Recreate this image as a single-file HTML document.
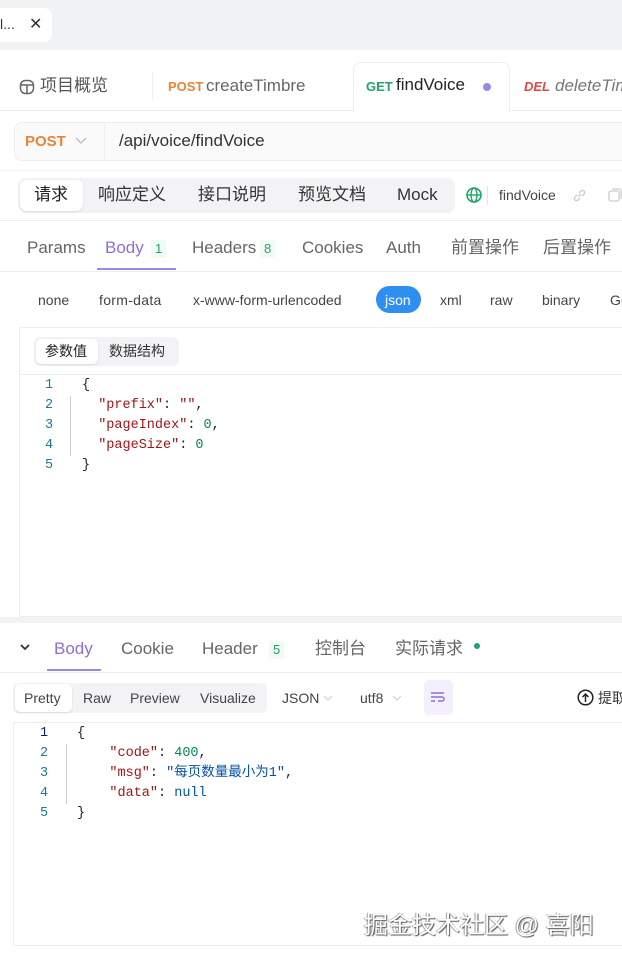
<!DOCTYPE html>
<html><head><meta charset="utf-8"><style>
*{margin:0;padding:0;box-sizing:border-box}
body{width:622px;height:962px;overflow:hidden;background:#fff;position:relative;font-family:"Liberation Sans","Noto Sans CJK SC",sans-serif;color:#333}
.a{position:absolute;white-space:nowrap;line-height:1.2}
.m{font-family:"Liberation Mono","DejaVu Sans Mono",monospace;font-size:13.5px}
.k{color:#a31515}.n{color:#098658}.s{color:#0451a5}
.ln{color:#237893}
.hl{position:absolute;height:1px;background:#ececee}
</style></head><body>
<div class="a" style="left:0;top:0;width:622px;height:50px;background:#f1f2f4"></div>
<div class="a" style="left:-10px;top:8px;width:62px;height:34px;background:#fff;border-radius:8px"></div>
<div class="a" style="left:0;top:16px;font-size:14px;color:#333">l...</div>
<div class="a" style="left:29px;top:15px;font-size:16px;color:#333">✕</div>

<div class="a" style="left:353px;top:62px;width:157px;height:50px;background:#fff;border:1px solid #eee;border-bottom:none;border-radius:8px 8px 0 0"></div>
<div class="hl" style="left:0;top:110px;width:353px"></div><div class="hl" style="left:510px;top:110px;width:112px"></div>
<svg class="a" style="left:19px;top:79px" width="16" height="16" viewBox="0 0 16 16"><rect x="1.5" y="1.5" width="13" height="13" rx="5" fill="none" stroke="#666" stroke-width="1.5"/><path d="M2 6h12M8 6v8" stroke="#666" stroke-width="1.5"/></svg>
<div class="a" style="left:40px;top:76px;font-size:17px;color:#555">项目概览</div>
<div class="a" style="left:152px;top:72px;width:1px;height:28px;background:#eee"></div>
<div class="a" style="left:168px;top:79px;font-size:13px;font-weight:bold;color:#e8833a">POST</div>
<div class="a" style="left:206px;top:76px;font-size:17px;color:#666">createTimbre</div>
<div class="a" style="left:366px;top:79px;font-size:13px;font-weight:bold;color:#1fa56a">GET</div>
<div class="a" style="left:396px;top:75px;font-size:17px;color:#222">findVoice</div>
<div class="a" style="left:483px;top:83px;width:8px;height:8px;border-radius:50%;background:#9b87e8"></div>
<div class="a" style="left:524px;top:79px;font-size:13px;font-weight:bold;font-style:italic;color:#e04848">DEL</div>
<div class="a" style="left:555px;top:76px;font-size:17px;font-style:italic;color:#777">deleteTimbre</div>

<div class="a" style="left:14px;top:122px;width:620px;height:39px;background:#fafafa;border:1px solid #eee;border-radius:8px"></div>
<div class="a" style="left:25px;top:133px;font-size:15px;font-weight:bold;color:#e8833a">POST</div>
<svg class="a" style="left:75px;top:137px" width="12" height="8"><path d="M1 1l5 5 5-5" fill="none" stroke="#bbb" stroke-width="1.3"/></svg>
<div class="a" style="left:104px;top:123px;width:1px;height:37px;background:#eee"></div>
<div class="a" style="left:119px;top:131px;font-size:17px;color:#333">/api/voice/findVoice</div>
<div class="hl" style="left:0;top:170px;width:622px;background:#f3f3f3"></div>

<div class="a" style="left:18px;top:178px;width:437px;height:35px;background:#f3f3f5;border-radius:8px"></div>
<div class="a" style="left:20px;top:180px;width:63px;height:31px;background:#fff;border-radius:7px;box-shadow:0 1px 2px rgba(0,0,0,.1)"></div>
<div class="a" style="left:34px;top:185px;font-size:17px;color:#222">请求</div>
<div class="a" style="left:98px;top:185px;font-size:17px;color:#333">响应定义</div>
<div class="a" style="left:198px;top:185px;font-size:17px;color:#333">接口说明</div>
<div class="a" style="left:298px;top:185px;font-size:17px;color:#333">预览文档</div>
<div class="a" style="left:397px;top:185px;font-size:17px;color:#333">Mock</div>
<svg class="a" style="left:466px;top:187px" width="16" height="16" viewBox="0 0 16 16"><circle cx="8" cy="8" r="7" fill="none" stroke="#1fa56a" stroke-width="1.6"/><ellipse cx="8" cy="8" rx="3" ry="7" fill="none" stroke="#1fa56a" stroke-width="1.4"/><path d="M1 8h14" stroke="#1fa56a" stroke-width="1.4"/></svg>
<div class="a" style="left:487px;top:186px;width:1px;height:19px;background:#e6e6e6"></div>
<div class="a" style="left:499px;top:187px;font-size:14px;color:#444">findVoice</div>
<svg class="a" style="left:572px;top:188px" width="15" height="15" viewBox="0 0 15 15"><path d="M6 9l3-3M5 7L3 9a2 2 0 003 3l2-2M10 8l2-2a2 2 0 00-3-3L7 5" fill="none" stroke="#ccc" stroke-width="1.3"/></svg>
<svg class="a" style="left:608px;top:188px" width="14" height="15"><rect x="1" y="3" width="10" height="10" rx="2" fill="none" stroke="#ccc" stroke-width="1.3"/><path d="M4 1h7a2 2 0 012 2v8" fill="none" stroke="#ccc" stroke-width="1.3"/></svg>
<div class="hl" style="left:0;top:220px;width:622px"></div>

<div class="a" style="left:27px;top:238px;font-size:17px;color:#666">Params</div>
<div class="a" style="left:105px;top:238px;font-size:17px;color:#8e6fd8">Body</div>
<div class="a" style="left:151px;top:240px;font-size:13px;color:#1fa56a;background:#f2faf5;padding:1px 4px">1</div>
<div class="a" style="left:192px;top:238px;font-size:17px;color:#666">Headers</div>
<div class="a" style="left:260px;top:240px;font-size:13px;color:#1fa56a;background:#f2faf5;padding:1px 4px">8</div>
<div class="a" style="left:302px;top:238px;font-size:17px;color:#666">Cookies</div>
<div class="a" style="left:386px;top:238px;font-size:17px;color:#666">Auth</div>
<div class="a" style="left:451px;top:238px;font-size:17px;color:#666">前置操作</div>
<div class="a" style="left:543px;top:238px;font-size:17px;color:#666">后置操作</div>
<div class="a" style="left:97px;top:268px;width:79px;height:2px;background:#9b87e8"></div>
<div class="hl" style="left:0;top:271px;width:622px"></div>

<div class="a" style="left:38px;top:292px;font-size:14px;color:#444">none</div>
<div class="a" style="left:99px;top:292px;font-size:14px;color:#444;letter-spacing:0.3px">form-data</div>
<div class="a" style="left:193px;top:292px;font-size:14px;color:#444">x-www-form-urlencoded</div>
<div class="a" style="left:376px;top:286px;width:45px;height:27px;background:#2e8ff0;border-radius:14px"></div>
<div class="a" style="left:385px;top:292px;font-size:14px;color:#fff">json</div>
<div class="a" style="left:440px;top:292px;font-size:14px;color:#444">xml</div>
<div class="a" style="left:490px;top:292px;font-size:14px;color:#444">raw</div>
<div class="a" style="left:542px;top:292px;font-size:14px;color:#444">binary</div>
<div class="a" style="left:610px;top:292px;font-size:14px;color:#444">Gr</div>

<div class="a" style="left:19px;top:327px;width:610px;height:290px;border:1px solid #eee;border-right:none"></div>
<div class="a" style="left:34px;top:337px;width:145px;height:29px;background:#f3f3f5;border-radius:6px"></div>
<div class="a" style="left:36px;top:339px;width:62px;height:25px;background:#fff;border-radius:5px;box-shadow:0 1px 2px rgba(0,0,0,.1)"></div>
<div class="a" style="left:45px;top:343px;font-size:14px;color:#222">参数值</div>
<div class="a" style="left:109px;top:343px;font-size:14px;color:#333">数据结构</div>
<div class="hl" style="left:20px;top:374px;width:602px"></div>
<div class="a" style="left:70px;top:396px;width:1px;height:60px;background:#ccc"></div>
<div class="a m" style="left:45px;top:376px;line-height:20px"><span class="ln">1<br>2<br>3<br>4<br>5</span></div>
<div class="a m" style="left:82px;top:376px;line-height:20px;color:#222">{<br>&nbsp;&nbsp;<span class="k">"prefix"</span>: <span class="k">""</span>,<br>&nbsp;&nbsp;<span class="k">"pageIndex"</span>: <span class="n">0</span>,<br>&nbsp;&nbsp;<span class="k">"pageSize"</span>: <span class="n">0</span><br>}</div>

<div class="a" style="left:0;top:617px;width:622px;height:6px;background:#f2f2f4"></div>
<svg class="a" style="left:19px;top:643px" width="12" height="9"><path d="M2 2l4 4 4-4" fill="none" stroke="#333" stroke-width="1.8"/></svg>
<div class="a" style="left:54px;top:639px;font-size:17px;color:#8e6fd8">Body</div>
<div class="a" style="left:121px;top:639px;font-size:17px;color:#666">Cookie</div>
<div class="a" style="left:202px;top:639px;font-size:17px;color:#666">Header</div>
<div class="a" style="left:269px;top:641px;font-size:13px;color:#1fa56a;background:#f2faf5;padding:1px 4px">5</div>
<div class="a" style="left:315px;top:639px;font-size:17px;color:#666">控制台</div>
<div class="a" style="left:395px;top:639px;font-size:17px;color:#666">实际请求</div>
<div class="a" style="left:474px;top:643px;width:6px;height:6px;border-radius:50%;background:#1fa56a"></div>
<div class="a" style="left:47px;top:669px;width:54px;height:2px;background:#9b87e8"></div>
<div class="hl" style="left:0;top:672px;width:622px"></div>

<div class="a" style="left:13px;top:683px;width:254px;height:30px;background:#f3f3f5;border-radius:6px"></div>
<div class="a" style="left:15px;top:684px;width:57px;height:28px;background:#fff;border-radius:5px;box-shadow:0 1px 2px rgba(0,0,0,.12)"></div>
<div class="a" style="left:24px;top:690px;font-size:14px;color:#444">Pretty</div>
<div class="a" style="left:83px;top:690px;font-size:14px;color:#444">Raw</div>
<div class="a" style="left:130px;top:690px;font-size:14px;color:#444">Preview</div>
<div class="a" style="left:200px;top:690px;font-size:14px;color:#444">Visualize</div>
<div class="a" style="left:282px;top:690px;font-size:14px;color:#444">JSON</div>
<svg class="a" style="left:323px;top:695px" width="10" height="6"><path d="M1 1l4 4 4-4" fill="none" stroke="#ccc"/></svg>
<div class="a" style="left:360px;top:690px;font-size:14px;color:#444">utf8</div>
<svg class="a" style="left:392px;top:695px" width="10" height="6"><path d="M1 1l4 4 4-4" fill="none" stroke="#ccc"/></svg>
<div class="a" style="left:424px;top:680px;width:29px;height:35px;background:#f3effc;border-radius:6px"></div>
<svg class="a" style="left:430px;top:691px" width="16" height="12"><path d="M1 2h13M1 6h11a2 2 0 010 4H8M1 10h4" fill="none" stroke="#8e6fd8" stroke-width="1.4"/></svg>
<svg class="a" style="left:577px;top:689px" width="17" height="17" viewBox="0 0 17 17"><circle cx="8.5" cy="8.5" r="7.3" fill="none" stroke="#222" stroke-width="1.5"/><path d="M8.5 13V5M5.5 8l3-3 3 3" fill="none" stroke="#222" stroke-width="1.5"/></svg>
<div class="a" style="left:598px;top:690px;font-size:14px;color:#333">提取</div>

<div class="hl" style="left:13px;top:722px;width:609px"></div>
<div class="a" style="left:13px;top:722px;width:1px;height:224px;background:#eee"></div>
<div class="hl" style="left:13px;top:945px;width:609px"></div>
<div class="a" style="left:66px;top:744px;width:1px;height:60px;background:#ccc"></div>
<div class="a m" style="left:40px;top:724px;line-height:20px"><span class="ln" style="color:#0b216f">1</span><br><span class="ln">2<br>3<br>4<br>5</span></div>
<div class="a m" style="left:77px;top:724px;line-height:20px;color:#222">{<br>&nbsp;&nbsp;&nbsp;&nbsp;<span class="k">"code"</span>: <span class="n">400</span>,<br>&nbsp;&nbsp;&nbsp;&nbsp;<span class="k">"msg"</span>: <span class="s">"每页数量最小为1"</span>,<br>&nbsp;&nbsp;&nbsp;&nbsp;<span class="k">"data"</span>: <span class="s">null</span><br>}</div>

<div class="a" style="left:364px;top:912px;font-size:24px;color:#fff;text-shadow:1px 1px 1px #555,-1px 0 1px #999">掘金技术社区 @ 喜阳</div>
</body></html>
